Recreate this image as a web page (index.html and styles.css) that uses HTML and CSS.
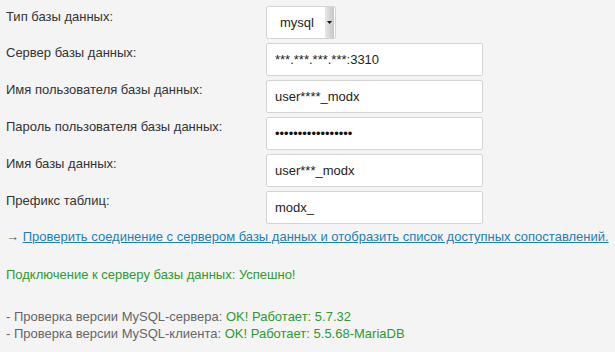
FILE: index.html
```html
<!DOCTYPE html>
<html lang="ru">
<head>
<meta charset="utf-8">
<link rel="stylesheet" href="styles.css">
</head>
<body>
<div class="page">
  <div class="form">
    <div class="label first">Тип базы данных:</div>
    <div class="field"><div class="select"><span class="select-text">mysql</span><span class="select-arrow"><svg width="5" height="3" viewBox="0 0 5 3"><path d="M0 0h5L2.5 3z" fill="#111"/></svg></span></div></div>
    <div class="label">Сервер базы данных:</div>
    <div class="field"><div class="input">***.***.***.***:3310</div></div>
    <div class="label">Имя пользователя базы данных:</div>
    <div class="field"><div class="input">user****_modx</div></div>
    <div class="label">Пароль пользователя базы данных:</div>
    <div class="field"><div class="input pwd">•••••••••••••••••</div></div>
    <div class="label">Имя базы данных:</div>
    <div class="field"><div class="input">user***_modx</div></div>
    <div class="label">Префикс таблиц:</div>
    <div class="field"><div class="input">modx_</div></div>
  </div>
  <p class="test">→ <a href="#">Проверить соединение с сервером базы данных и отобразить список доступных сопоставлений.</a></p>
  <p class="ok">Подключение к серверу базы данных: Успешно!</p>
  <p class="checks">- Проверка версии MySQL-сервера: <span class="green">OK! Работает: 5.7.32</span><br>- Проверка версии MySQL-клиента: <span class="green">OK! Работает: 5.5.68-MariaDB</span></p>
</div>
</body>
</html>
```
FILE: styles.css
```css
html, body {
  margin: 0;
  padding: 0;
  background: #f4f4f4;
}
body {
  font-family: "Liberation Sans", Arial, sans-serif;
  font-size: 13px;
  color: #333;
}
.page {
  padding: 6px 6px 0 6px;
}
.form {
  display: grid;
  grid-template-columns: 260px 217px;
  row-gap: 4px;
}
.label {
  padding-top: 1px;
  line-height: 17px;
}
.label.first {
  padding-top: 2px;
}
.select {
  width: 70px;
  height: 33px;
  box-sizing: border-box;
  border: 1px solid #d4d4d4;
  border-radius: 2px;
  background: #fff;
  display: flex;
  align-items: center;
  justify-content: space-between;
}
.select-text {
  padding-left: 13px;
  color: #222;
}
.select-arrow {
  width: 9px;
  height: 31px;
  margin-right: 1px;
  background: linear-gradient(90deg, #e8e8e8, #c6c6c6);
  display: flex;
  align-items: center;
  justify-content: center;
}
.select-arrow svg { display: block; }
.input {
  height: 33px;
  box-sizing: border-box;
  border: 1px solid #d4d4d4;
  border-radius: 2px;
  background: #fff;
  padding: 0 8px;
  display: flex;
  align-items: center;
  color: #222;
}
.pwd {
  color: #111;
}
.test {
  margin: 4px 0 0 0;
  line-height: 17px;
  color: #555;
}
.test a {
  color: #1e7fb5;
  text-decoration: underline;
}
.ok {
  margin: 21px 0 0 0;
  line-height: 17px;
  color: #2e9a2e;
}
.checks {
  margin: 25px 0 0 0;
  line-height: 17px;
  color: #666;
}
.green {
  color: #2e9a2e;
}
```
